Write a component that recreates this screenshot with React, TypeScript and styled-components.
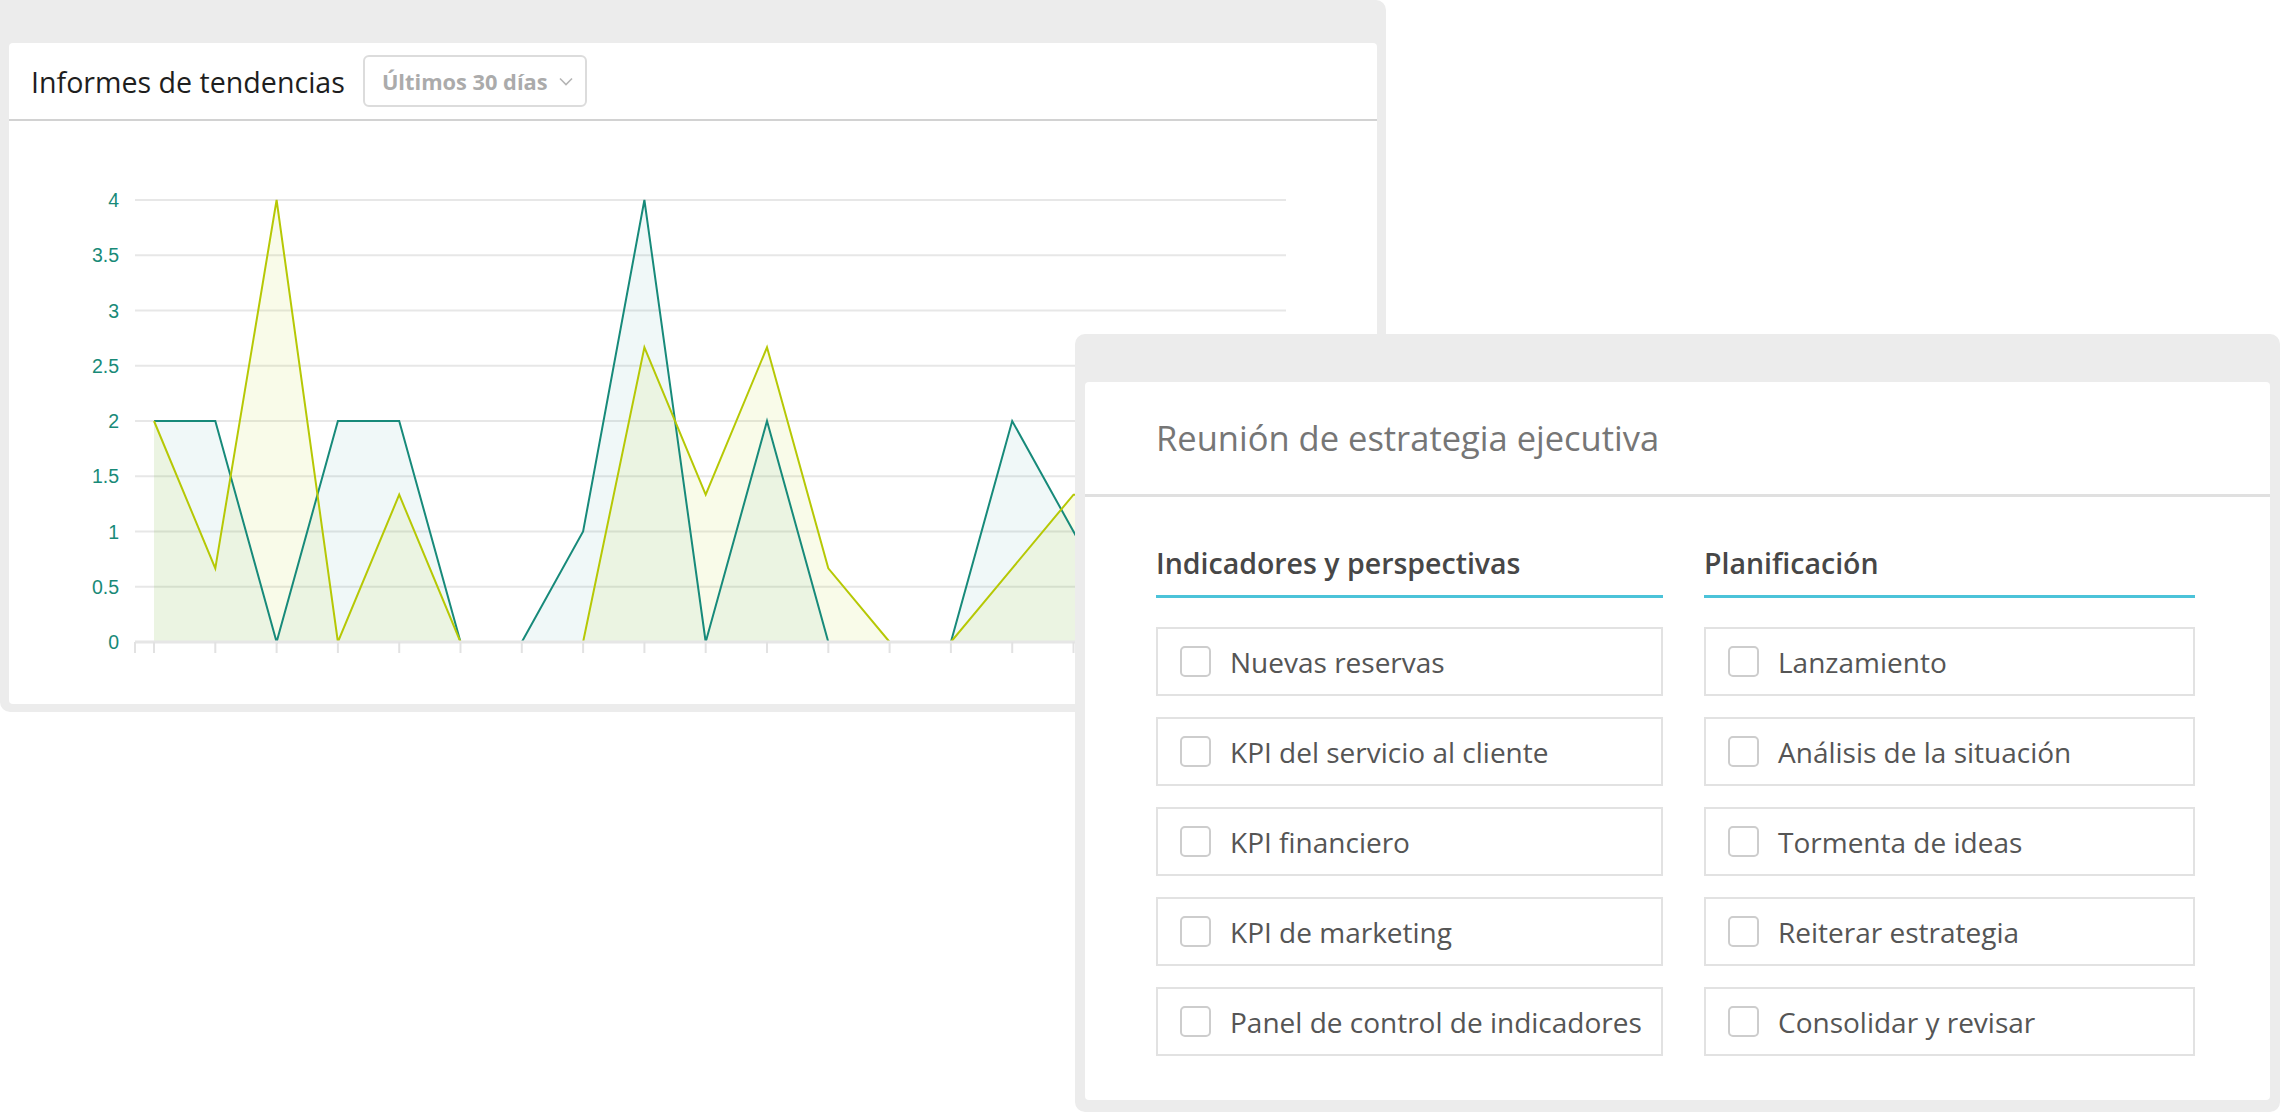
import React from "react";
import styled, { createGlobalStyle } from "styled-components";

const GlobalStyle = createGlobalStyle`
  html, body {
    margin: 0;
    padding: 0;
    background: #ffffff;
  }
  body {
    font-family: "Open Sans", "Noto Sans", sans-serif;
  }
  * {
    box-sizing: border-box;
  }
`;

const Desktop = styled.div`
  position: relative;
  width: 2280px;
  height: 1112px;
  overflow: hidden;
  background: #ffffff;
`;

// the two app windows sit on a free canvas, overlapping
const Window = styled.div<{ $left: number; $top: number; $width: number; $height: number; $pad: string }>`
  position: absolute;
  left: ${(p) => p.$left}px;
  top: ${(p) => p.$top}px;
  width: ${(p) => p.$width}px;
  height: ${(p) => p.$height}px;
  padding: ${(p) => p.$pad};
  background: #ececec;
  border-radius: 10px;
  display: flex;
  flex-direction: column;
`;

const Panel = styled.div`
  flex: 1;
  background: #ffffff;
  border-radius: 4px;
  display: flex;
  flex-direction: column;
  overflow: hidden;
`;

/* ---------- trend report ---------- */

const ReportHeader = styled.div`
  height: 78px;
  flex-shrink: 0;
  display: flex;
  align-items: center;
  gap: 18px;
  padding-left: 22px;
  border-bottom: 2px solid #d2d2d2;
`;

const ReportTitle = styled.h2`
  margin: 0;
  font-size: 28.6px;
  font-weight: 400;
  color: #1e1e1e;
`;

const Dropdown = styled.div`
  width: 224px;
  height: 52px;
  border: 2px solid #dcdcdc;
  border-radius: 6px;
  display: flex;
  align-items: center;
  justify-content: space-between;
  padding: 0 12px 0 17px;
  color: #ababab;
  font-size: 21.8px;
  font-weight: 700;
`;

const ChartBox = styled.div`
  flex: 1;
  svg {
    display: block;
  }
`;

/* ---------- meeting checklist ---------- */

const MeetingHeader = styled.div`
  height: 115px;
  flex-shrink: 0;
  display: flex;
  align-items: center;
  padding: 0 71px 2px;
  border-bottom: 3px solid #e0e0e0;
`;

const MeetingTitle = styled.h2`
  margin: 0;
  font-size: 34.5px;
  font-weight: 400;
  color: #767676;
`;

const Columns = styled.div`
  display: grid;
  grid-template-columns: 507px 491px;
  column-gap: 41px;
  padding: 46px 71px 0;
`;

const Column = styled.section`
  display: flex;
  flex-direction: column;
`;

const ColumnHead = styled.h3`
  margin: 0;
  font-size: 28.5px;
  line-height: 40px;
  font-weight: 600;
  color: #474747;
  padding-bottom: 12px;
  border-bottom: 3px solid #4bc3d9;
`;

const ItemList = styled.ul`
  list-style: none;
  margin: 29px 0 0;
  padding: 0;
  display: flex;
  flex-direction: column;
  gap: 21px;
`;

const Item = styled.li`
  height: 69px;
  border: 2px solid #e2e2e2;
  display: flex;
  align-items: center;
  gap: 19px;
  padding-left: 22px;
  font-size: 28px;
  color: #555555;
`;

const Box = styled.span`
  width: 31px;
  height: 31px;
  border: 2.5px solid #cdcdcd;
  border-radius: 5px;
  flex-shrink: 0;
`;

const teal = [2, 2, 0, 2, 2, 0, 0, 1, 4, 0, 2, 0, 0, 0, 2, 1, 0, 0, 0];
const lime = [2, 0.667, 4, 0, 1.333, 0, 0, 0, 2.667, 1.333, 2.667, 0.667, 0, 0, 0.667, 1.333, 1.333, 1.333, 1.333];

const X0 = 154;
const STEP = 61.3;
const Y0 = 642;
const UNIT = 110.5;

const px = (i: number) => X0 + i * STEP;
const py = (v: number) => Y0 - v * UNIT;

function linePoints(data: number[]) {
  return data.map((v, i) => `${px(i).toFixed(1)},${py(v).toFixed(1)}`).join(" ");
}

function areaPoints(data: number[]) {
  return `${px(0)},${Y0} ${linePoints(data)} ${px(data.length - 1).toFixed(1)},${Y0}`;
}

function TrendChart() {
  const ticks = [0, 0.5, 1, 1.5, 2, 2.5, 3, 3.5, 4];
  // viewBox is in page coordinates so the numbers read off the design line up
  return (
    <svg width={1368} height={583} viewBox="9 121 1368 583">
      {ticks.map((t) => (
        <g key={t}>
          <line x1={135} x2={1286} y1={py(t)} y2={py(t)} stroke="#e7e7e7" strokeWidth={2} />
          <text
            x={119}
            y={py(t) + 7}
            textAnchor="end"
            fontFamily="'Liberation Sans', Arial, sans-serif"
            fontSize={19.5}
            fill="#188a78"
          >
            {t}
          </text>
        </g>
      ))}
      <polygon points={areaPoints(teal)} fill="rgba(0,128,128,0.06)" />
      <polygon points={areaPoints(lime)} fill="rgba(190,210,0,0.085)" />
      <polyline points={linePoints(teal)} fill="none" stroke="#178a7a" strokeWidth={2} />
      <polyline points={linePoints(lime)} fill="none" stroke="#b6c805" strokeWidth={2} />
      <line x1={135} x2={1286} y1={Y0} y2={Y0} stroke="#e6e6e6" strokeWidth={3} />
      {[135, ...teal.map((_, i) => px(i))].map((x) => (
        <line key={x} x1={x} x2={x} y1={Y0} y2={Y0 + 11} stroke="#e2e2e2" strokeWidth={2} />
      ))}
    </svg>
  );
}

const left = ["Nuevas reservas", "KPI del servicio al cliente", "KPI financiero", "KPI de marketing", "Panel de control de indicadores"];
const right = ["Lanzamiento", "Análisis de la situación", "Tormenta de ideas", "Reiterar estrategia", "Consolidar y revisar"];

export default function App() {
  return (
    <Desktop>
      <GlobalStyle />
      <Window $left={0} $top={0} $width={1386} $height={712} $pad="43px 9px 8px 9px" style={{ borderTopLeftRadius: 0 }}>
        <Panel>
          <ReportHeader>
            <ReportTitle>Informes de tendencias</ReportTitle>
            <Dropdown>
              <span>Últimos 30 días</span>
              <svg width="14" height="9" viewBox="0 0 14 9">
                <path d="M1 1.5 L7 7.5 L13 1.5" fill="none" stroke="#b5b5b5" strokeWidth="1.6" />
              </svg>
            </Dropdown>
          </ReportHeader>
          <ChartBox>
            <TrendChart />
          </ChartBox>
        </Panel>
      </Window>
      <Window $left={1075} $top={334} $width={1205} $height={778} $pad="48px 10px 12px 10px">
        <Panel>
          <MeetingHeader>
            <MeetingTitle>Reunión de estrategia ejecutiva</MeetingTitle>
          </MeetingHeader>
          <Columns>
            <Column>
              <ColumnHead>Indicadores y perspectivas</ColumnHead>
              <ItemList>
                {left.map((t) => (
                  <Item key={t}>
                    <Box />
                    {t}
                  </Item>
                ))}
              </ItemList>
            </Column>
            <Column>
              <ColumnHead>Planificación</ColumnHead>
              <ItemList>
                {right.map((t) => (
                  <Item key={t}>
                    <Box />
                    {t}
                  </Item>
                ))}
              </ItemList>
            </Column>
          </Columns>
        </Panel>
      </Window>
    </Desktop>
  );
}
